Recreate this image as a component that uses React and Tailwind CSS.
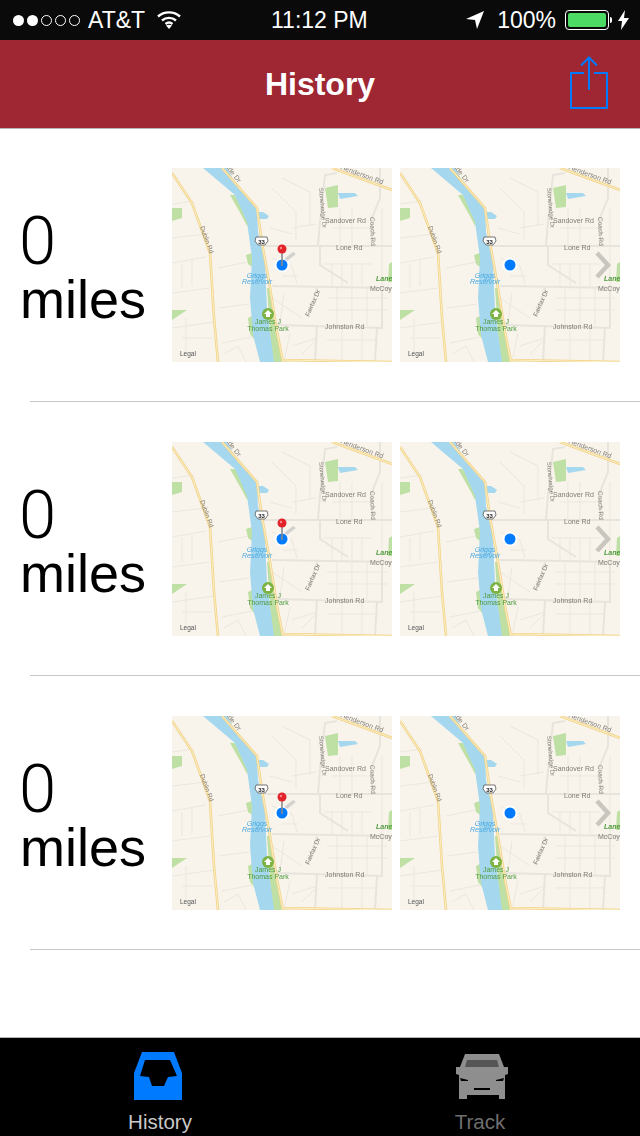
import React from "react";

const font = { fontFamily: "'Liberation Sans', Arial, sans-serif" };

function Wifi() {
  return (
    <svg width="24" height="20" viewBox="0 0 24 20" fill="none" stroke="#fff" strokeWidth="2.4">
      <path d="M1 6.5C7 1 17 1 23 6.5" />
      <path d="M5 10.5C9 7 15 7 19 10.5" />
      <path d="M8.5 14C10.5 12.4 13.5 12.4 15.5 14" />
      <path d="M12 19l-3-3.4c1.8-1.2 4.2-1.2 6 0z" fill="#fff" stroke="none" />
    </svg>
  );
}

function StatusBar() {
  return (
    <div className="h-10 bg-[#0a0a0a] text-white flex items-center text-[23px] relative">
      <div className="flex items-center gap-[3px] pl-[13px]">
        <span className="w-[11px] h-[11px] rounded-full bg-white" />
        <span className="w-[11px] h-[11px] rounded-full bg-white" />
        <span className="w-[11px] h-[11px] rounded-full border border-white" />
        <span className="w-[11px] h-[11px] rounded-full border border-white" />
        <span className="w-[11px] h-[11px] rounded-full border border-white" />
      </div>
      <span className="ml-[8px]">AT&amp;T</span>
      <span className="ml-[12px] flex"><Wifi /></span>
      <span className="absolute left-[271px] top-[7px] leading-[26px]">11:12 PM</span>
      <div className="ml-auto flex items-center pr-[11px]">
        <svg width="18" height="20" viewBox="0 0 18 20">
          <path d="M18 1L11 19 9 10 0 9z" fill="#fff" />
        </svg>
        <span className="ml-[13px]">100%</span>
        <div className="ml-[9px] w-[44px] h-[20px] rounded-[4px] border border-white p-[2px]">
          <div className="w-full h-full rounded-[2px] bg-[#4cd964]" />
        </div>
        <span className="w-[2px] h-[6px] bg-white ml-[1px] rounded-r-[2px]" />
        <svg className="ml-[6px]" width="11" height="20" viewBox="0 0 11 20">
          <path d="M7 0L0 11h4l-1 9 8-12H6z" fill="#fff" />
        </svg>
      </div>
    </div>
  );
}

function NavBar() {
  return (
    <div className="h-[89px] bg-[#9e2733] border-b border-[#b5b5b5] relative flex items-center justify-center">
      <span className="text-white text-[32px] font-bold leading-none">History</span>
      <svg className="absolute left-[569px] top-[16px]" width="40" height="54" viewBox="0 0 40 54" fill="none" stroke="#007aff" strokeWidth="2">
        <path d="M15 17H2v35h36V17H25" />
        <path d="M20 34V2M12 9.5L20 1.5l8 8" />
      </svg>
    </div>
  );
}

function MapThumb({ pin, chevron }) {
  return (
    <div className="w-[220px] h-[194px] overflow-hidden bg-[#f8f4ec]">
      <svg className="block blur-[0.45px]" width="220" height="194" viewBox="0 0 220 194" fill="none" style={font}>
        <rect width="220" height="194" fill="#f8f4ec" />
        {/* parks */}
        <path d="M153 20l13-3v22l-10 1z" fill="#bfe0a4" />
        <path d="M0 40h10v10l-10 3zM0 142l15 0-15 10zM217 96l3-2v20h-4z" fill="#bfe0a4" />
        <path d="M58 27l5 0 15 27-3 4-4-8zM74 87l6-2 0 14-4-3zM76 150l4-2 3 24-5-6zM95 120l3 0 13 74H100z" fill="#bfe0a4" />
        {/* water */}
        <path d="M31 0h24l11 20 19 20 1 24 7 30 1 26 1 20 3 24 4 30H88l-7-27-3-37 2-40-5-36-12-27z" fill="#a5d8ef" />
        <path d="M85 44l6 0 6 4-2 3-9 0zM166 25l17 0 3 3-18 3z" fill="#a5d8ef" />
        {/* small streets */}
        <g stroke="#ebe7df" strokeWidth="1">
          <path d="M0 36l22-3M0 125l38-5M0 160l42-6M47 140l30-4M46 100l30-6M0 70l34-4M0 95l34-6M10 120l0-24M20 118l0-26" />
          <path d="M100 20l24 24 0 28M110 10l28 14 0 34M120 60l24-4M98 60l22 6M168 40l0 38M180 40l0 38M160 60l40 0M210 40l0 80" />
          <path d="M100 90l20 8 5 18M110 108l16 0M100 130l30 20M112 125l-4 30M118 165l-6 29M120 178l25-8M130 186l14-14" />
          <path d="M152 96l48 0M160 96l0 22M170 96l0 22M180 96l0 22M190 96l0 22M155 130l60 0M155 142l60 0M165 120l0 38M180 120l0 38M195 120l0 38M155 172l50 0M170 160l0 34M190 160l0 34" />
          <path d="M10 170l30 0M14 150l0 36M50 175l30-6M52 186l14-8 8 16" />
        </g>
        {/* main streets */}
        <g stroke="#e7e4de" strokeWidth="2">
          <path d="M90 78h130M100 118l120 2M105 157l105 3 0-40M148 78v19l28 18M146 77l2-23 5-47 12-2M200 74V50l8-20V0" />
          <path d="M136 149l9-29M145 157l-2 37M205 160l-2 34" />
        </g>
        {/* yellow roads */}
        <g stroke="#f2d38a" strokeWidth="2.6">
          <path d="M50 0l35 40 5 35 8 45 7 44 6 30M0 5l20 30 18 50 4 65 4 44M111 192l109 2M160 0l60 22" />
        </g>
        <g stroke="#fcf2cb" strokeWidth="0.9">
          <path d="M50 0l35 40 5 35 8 45 7 44 6 30M0 5l20 30 18 50 4 65 4 44M111 192l109 2M160 0l60 22" />
        </g>
        {/* labels */}
        <g fontSize="7" fill="#807c74">
          <text x="153" y="54.5">Sandover Rd</text>
          <text x="164" y="82">Lone Rd</text>
          <text x="198" y="123">McCoy</text>
          <text x="153" y="161">Johnston Rd</text>
          <text transform="translate(168 1) rotate(20)" x="0" y="0">Henderson Rd</text>
          <text transform="translate(66 15) rotate(52)" textAnchor="end" x="0" y="0">Riverside Dr</text>
          <text transform="translate(28 59) rotate(70)" x="0" y="0" fontSize="6.5">Dublin Rd</text>
          <text transform="translate(147 20) rotate(85)" x="0" y="0" fontSize="6">Stonehedge Dr</text>
          <text transform="translate(198 49) rotate(88)" x="0" y="0" fontSize="6.5">Coach Rd</text>
          <text transform="translate(137 149) rotate(-66)" x="0" y="0" fontSize="6.5">Fairfax Dr</text>
        </g>
        <text x="204" y="113" fontSize="7" fontWeight="700" fontStyle="italic" fill="#4f9a3d">Lane</text>
        <text x="85" y="110" fontSize="7" fontStyle="italic" textAnchor="middle" fill="#4aa8e0">Griggs</text>
        <text x="85" y="116" fontSize="7" fontStyle="italic" textAnchor="middle" fill="#4aa8e0">Reservoir</text>
        <text x="96" y="156" fontSize="7" textAnchor="middle" fill="#4f9a3d">James J</text>
        <text x="96" y="162.5" fontSize="7" textAnchor="middle" fill="#4f9a3d">Thomas Park</text>
        <text x="8" y="188" fontSize="6.5" fill="#555">Legal</text>
        {/* route shield */}
        <path d="M84 69h11l1 4-3 4H86l-3-4z" fill="#fff" stroke="#555" strokeWidth="0.8" />
        <text x="89.5" y="75.5" fontSize="6" fontWeight="700" textAnchor="middle" fill="#222">33</text>
        {/* park marker */}
        <circle cx="96" cy="146" r="6" fill="#7cb342" />
        <path d="M96 142l4 4h-2v3h-4v-3h-2z" fill="#fff" />
        {/* location dot */}
        <circle cx="110" cy="97" r="7.5" fill="#fff" />
        <circle cx="110" cy="97" r="5.5" fill="#007aff" />
        {pin && (
          <>
            <path d="M112 91l9-7 3 2-9 7z" fill="#bbb" opacity="0.6" />
            <path d="M110 84v14" stroke="#8a8a8a" strokeWidth="1.6" />
            <circle cx="110" cy="81" r="4.5" fill="#e2232a" />
            <circle cx="109" cy="80" r="1.2" fill="#f78a8a" />
          </>
        )}
        {chevron && <path d="M197 85l11 12-11 12" stroke="#c9c6bf" strokeWidth="4.5" />}
      </svg>
    </div>
  );
}

function Row() {
  return (
    <div className="h-[274px] flex flex-col">
      <div className="flex-1 flex pt-[39px] pr-5 pl-5">
        <div className="w-[152px] pt-[43px] text-black">
          <div className="font-['Roboto'] font-light text-[67px] leading-[60px] -ml-[1px]">0</div>
          <div className="text-[54px] leading-[56px]">miles</div>
        </div>
        <div className="flex gap-2">
          <MapThumb pin />
          <MapThumb chevron />
        </div>
      </div>
      <div className="ml-[30px] h-px mb-px bg-[#c8c7cc]" />
    </div>
  );
}

function TabBar() {
  return (
    <div className="mt-auto h-[99px] bg-black border-t border-[#b5b5b5] flex">
      <div className="w-1/2 flex flex-col items-center pt-[14px]">
        <svg className="-ml-1" width="48" height="48" viewBox="0 0 48 48">
          <path d="M8 0h32l8 21v27H0V21z" fill="#007aff" />
          <path d="M11 8h25l7 16-9 1-4 9H18l-3-9-9-1z" fill="#000" />
        </svg>
        <span className="text-[20.5px] leading-6 mt-[10px] text-[#c9c9c9]">History</span>
      </div>
      <div className="w-1/2 flex flex-col items-center pt-[16px]">
        <svg className="ml-1" width="52" height="46" viewBox="0 0 52 46">
          <path d="M9 0h34l5 13h4v7l-3 1v24h-6v-4H11v4H3V21l-3-1v-7h4z" fill="#8e8e8e" />
          <path d="M11 6h30l2 7H9z" fill="#555" />
          <path d="M4 24l8 2v1H5zM48 24l-8 2v1h7zM18 34h16v2H18z" fill="#000" />
        </svg>
        <span className="text-[20.5px] leading-6 mt-[10px] text-[#6f6f6f]">Track</span>
      </div>
    </div>
  );
}

export default function App() {
  return (
    <div className="w-[640px] h-[1136px] bg-white flex flex-col overflow-hidden" style={font}>
      <StatusBar />
      <NavBar />
      <Row />
      <Row />
      <Row />
      <TabBar />
    </div>
  );
}
